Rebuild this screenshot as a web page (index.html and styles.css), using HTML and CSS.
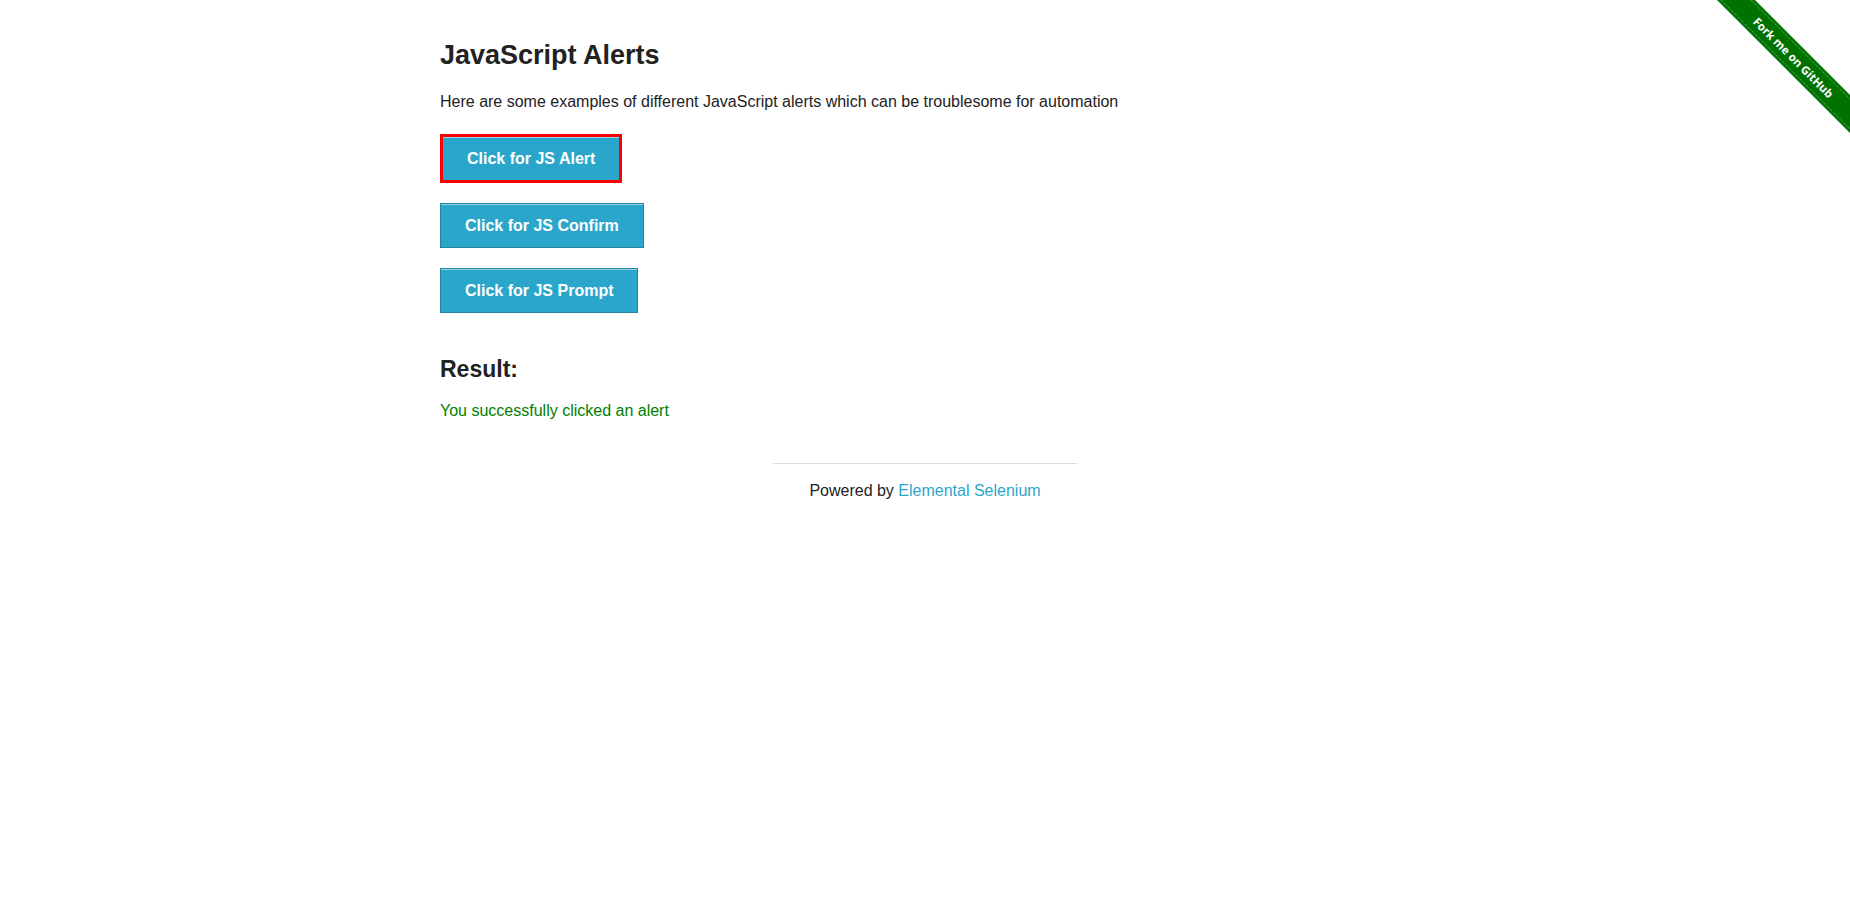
FILE: index.html
```html
<!DOCTYPE html>
<html lang="en">
<head>
<meta charset="utf-8">
<title>The Internet</title>
<link rel="stylesheet" href="styles.css">
</head>
<body>
<a class="ribbon" href="#" aria-label="Fork me on GitHub">
  <svg width="149" height="149" viewBox="0 0 149 149">
    <polygon class="ribbon-band" points="16,0 54,0 149,95 149,133"></polygon>
    <line class="ribbon-edge" x1="20" y1="0" x2="149" y2="129"></line>
    <line class="ribbon-edge" x1="50" y1="0" x2="149" y2="99"></line>
    <text class="ribbon-text" x="92.5" y="57.5" transform="rotate(45 92.5 57.5)" text-anchor="middle" dominant-baseline="central">Fork me on GitHub</text>
  </svg>
</a>
<div class="row">
  <div class="example">
    <h3 class="title">JavaScript Alerts</h3>
    <p class="intro">Here are some examples of different JavaScript alerts which can be troublesome for automation</p>
    <ul class="buttons">
      <li><button class="btn btn-focus">Click for JS Alert</button></li>
      <li><button class="btn">Click for JS Confirm</button></li>
      <li><button class="btn">Click for JS Prompt</button></li>
    </ul>
    <h4 class="result-title">Result:</h4>
    <p class="result">You successfully clicked an alert</p>
  </div>
</div>
<div class="footer">
  <div class="footer-col">
    <hr class="rule">
    <div class="powered">Powered by <a class="link" href="#">Elemental Selenium</a></div>
  </div>
</div>
</body>
</html>
```
FILE: styles.css
```css
html, body {
  margin: 0;
  padding: 0;
  background: #fff;
}
body {
  font-family: "Liberation Sans", Arial, sans-serif;
  font-size: 16px;
  color: #222;
}
.row {
  max-width: 1000px;
  margin: 0 auto;
  padding: 0 15px;
  box-sizing: border-box;
}
.example {
  display: flex;
  flex-direction: column;
  align-items: flex-start;
}
.title {
  margin: 40px 0 0;
  font-weight: 700;
  font-size: 27px;
  line-height: 31px;
  color: #222;
}
.intro {
  margin: 21px 0 0;
  font-size: 16px;
  line-height: 20px;
  color: #222;
}
.buttons {
  list-style: none;
  margin: 22px 0 0;
  padding: 0;
  display: flex;
  flex-direction: column;
  align-items: flex-start;
  gap: 20px;
}
.buttons li {
  display: flex;
}
.btn {
  font-family: "Liberation Sans", Arial, sans-serif;
  font-weight: 700;
  font-size: 16px;
  line-height: 19px;
  padding: 12px 24px;
  margin: 0;
  color: #fff;
  background: #2ba6cb;
  border: 1px solid #2284a1;
  border-radius: 0;
  box-shadow: inset 0 1px 0 rgba(255, 255, 255, 0.5);
  cursor: pointer;
}
.btn-focus {
  border: 3px solid #ff0000;
}
.result-title {
  margin: 43px 0 0;
  font-weight: 700;
  font-size: 23px;
  line-height: 27px;
  color: #222;
}
.result {
  margin: 18px 0 0;
  font-size: 16px;
  line-height: 20px;
  color: green;
}
.footer {
  max-width: 1000px;
  margin: 0 auto;
  display: flex;
  justify-content: center;
}
.footer-col {
  width: 333.33px;
  padding: 0 15px;
  box-sizing: border-box;
}
.rule {
  margin: 42px 0 0;
  border: 0;
  border-top: 1px solid #ddd;
  height: 0;
}
.powered {
  margin-top: 17px;
  text-align: center;
  line-height: 20px;
  color: #222;
}
.link {
  color: #2ba6cb;
  text-decoration: none;
}
.ribbon {
  position: absolute;
  top: 0;
  right: 0;
  width: 149px;
  height: 149px;
  display: block;
}
.ribbon svg {
  display: block;
}
.ribbon-band {
  fill: #007200;
}
.ribbon-edge {
  stroke: rgba(255, 255, 255, 0.45);
  stroke-width: 1;
  stroke-dasharray: 1 1;
}
.ribbon-text {
  fill: #fff;
  font-family: "Open Sans", "Noto Sans", sans-serif;
  font-weight: 700;
  font-size: 11.5px;
}
```
